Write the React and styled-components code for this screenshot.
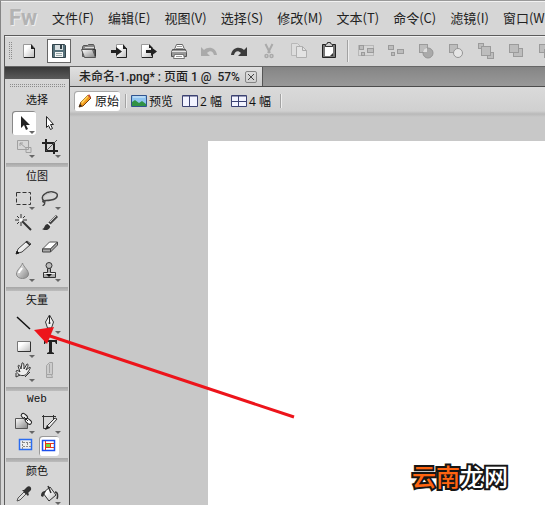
import React from 'react';
import styled, { createGlobalStyle, css } from 'styled-components';

const GlobalStyle = createGlobalStyle`
  * {
    box-sizing: border-box;
  }
  body {
    margin: 0;
    background: #d6d6d6;
    font-family: 'Noto Sans', 'Noto Sans CJK SC', sans-serif;
    color: #111;
  }
  button {
    font: inherit;
    color: inherit;
    border: 0;
    padding: 0;
    background: none;
  }
  svg {
    display: block;
    flex: none;
  }
`;

const dots = css`
  background: repeating-linear-gradient(#d6d6d6 0 1px, transparent 1px 2px),
    repeating-linear-gradient(90deg, #8c8c8c 0 1px, #d6d6d6 1px 2px);
`;

const Window = styled.div`
  position: relative;
  height: 100vh;
  display: flex;
  flex-direction: column;
  overflow: hidden;
  white-space: nowrap;
  border-top: 1px solid #9a9a9a;
  border-left: 1px solid #858585;
`;

const MenuBar = styled.nav`
  flex: none;
  height: 34px;
  display: flex;
  align-items: center;
  gap: 14px;
  padding: 0 0 2px 8px;
  border-top: 1px solid #f2f2f2;
  background: #d6d6d6;
  overflow: hidden;
`;

const Logo = styled.span`
  flex: none;
  width: 29px;
  font: 700 22px/24px Roboto, sans-serif;
  color: #b3b3b3;
  text-shadow: 1px 1px 0 #eee;
`;

const MenuItem = styled.button`
  flex: none;
  font-family: 'Noto Sans CJK SC', sans-serif;
  font-size: 13px;
  line-height: 20px;
  color: #222;
`;

const Body = styled.div`
  flex: 1;
  min-height: 0;
  display: flex;
  flex-direction: column;
  margin-left: 3px;
  border-left: 1px solid #5c5c5c;
  border-top: 1px solid #5c5c5c;
`;

const ToolBar = styled.div`
  flex: none;
  height: 31px;
  display: flex;
  align-items: center;
  gap: 6px;
  padding: 0 0 2px 4px;
  border-top: 1px solid #f0f0f0;
  border-bottom: 1px solid #666;
  background: #d6d6d6;
  overflow: hidden;
`;

const Grip = styled.span`
  flex: none;
  width: 4px;
  height: 19px;
  margin-right: -2px;
  ${dots}
`;

const ToolBarButton = styled.button`
  flex: none;
  width: 24px;
  height: 24px;
  display: flex;
  align-items: center;
  justify-content: center;
  ${props =>
    props.$active &&
    css`
      background: #fff;
      border: 1px solid #666;
    `}
`;

const Separator = styled.span`
  flex: none;
  width: 1px;
  height: ${props => props.$height};
  background: #a2a2a2;
  box-shadow: 1px 0 0 #eee;
`;

const Main = styled.div`
  flex: 1;
  min-height: 0;
  display: flex;
`;

const Palette = styled.aside`
  flex: none;
  width: 65px;
  border-right: 1px solid #4a4a4a;
  background: #d6d6d6;
  overflow: hidden;
`;

const PaletteHead = styled.div`
  height: 12px;
  background: linear-gradient(#383838, #5b5b5b);
`;

const PaletteGrip = styled.div`
  height: 4px;
  margin: 4px 4px 4px 5px;
  ${dots}
`;

const Section = styled.section`
  padding-bottom: ${props => (props.$tight ? '1px' : '4px')};
`;

const SectionTitle = styled.h2`
  height: 20px;
  margin: 0;
  font: 400 11px/17px ${props => (props.$mono ? "'Liberation Mono'" : "'Noto Sans CJK SC'")}, sans-serif;
  text-align: center;
`;

const Divider = styled.hr`
  height: 4px;
  margin: 0 1px;
  border: 0;
  background: linear-gradient(#a6a6a6, #bcbcbc);
`;

const ToolGrid = styled.div`
  display: grid;
  grid-template-columns: 26px 26px;
  grid-auto-rows: 24px;
  justify-content: center;
`;

const Tool = styled.button`
  width: 24px;
  height: 24px;
  margin: 0 1px;
  border-radius: 3px;
  ${props =>
    props.$active &&
    css`
      background: #fff;
      box-shadow: inset 1px 1px 0 #888;
    `}
`;

const WebModes = styled.div`
  display: flex;
  justify-content: center;
  gap: 3px;
  padding: 1px 0;
`;

const ModeButton = styled.button`
  width: 20px;
  height: 20px;
  border-radius: 3px;
  background: ${props => (props.$active ? '#fff' : 'none')};
  box-shadow: ${props => (props.$active ? 'inset 1px 1px 0 #999' : 'none')};
`;

const Document = styled.main`
  flex: 1;
  min-width: 0;
  display: flex;
  flex-direction: column;
`;

const TabStrip = styled.div`
  flex: none;
  height: 20px;
  display: flex;
  border-bottom: 1px solid #4c4c4c;
  background: linear-gradient(#858585, #999);
`;

const Tab = styled.div`
  display: flex;
  align-items: center;
  gap: 5px;
  padding: 0 5px 0 9px;
  border-right: 1px solid #555;
  background: linear-gradient(#e0e0e0, #cbcbcb);
  font: 500 12px/18px Roboto, 'Noto Sans CJK SC', sans-serif;
  color: #222;
  white-space: pre;
`;

const CloseButton = styled.button`
  width: 12px;
  height: 12px;
  border: 1px solid #858585;
  border-radius: 2px;
`;

const ViewBar = styled.div`
  flex: none;
  height: 30px;
  display: flex;
  align-items: center;
  gap: 5px;
  padding: 0 4px 3px;
  background: linear-gradient(#dadada, #d0d0d0 24px, #b9b9b9 27px, #c8c8c8);
`;

const ViewButton = styled.button`
  display: flex;
  align-items: center;
  gap: 2px;
  height: 20px;
  padding: ${props => (props.$active ? '0 1px 0 3px' : '0 4px 0 0')};
  font-size: 12px;
  font-family: 'Open Sans', 'Noto Sans CJK SC', sans-serif;
  ${props =>
    props.$active &&
    css`
      background: #fff;
      border-radius: 3px;
      box-shadow: inset 1px 1px 0 #aaa;
    `}
`;

const Workspace = styled.div`
  flex: 1;
  min-height: 0;
  display: flex;
  padding: 24px 0 0 138px;
  background: #c8c8c8;
`;

const Page = styled.div`
  flex: 1;
  background: #fff;
`;

const Pointer = styled.svg`
  position: absolute;
  left: 32px;
  top: 324px;
  pointer-events: none;
`;

const Watermark = styled.div`
  position: absolute;
  right: 37px;
  bottom: 12px;
  font: 500 24px/34px 'Noto Sans CJK SC', sans-serif;
  color: #fff;
  -webkit-text-stroke: 4px #161616;
  paint-order: stroke fill;

  em {
    font-style: normal;
    color: #ff6410;
  }
`;

const menus = ['文件(F)', '编辑(E)', '视图(V)', '选择(S)', '修改(M)', '文本(T)', '命令(C)', '滤镜(I)', '窗口(W)'];

const FLYOUT = <path d="M17 20h6l-3 3z" fill="#666" />;

const Glyph = ({ size = 24, children }) => (
  <svg width={size} height={size} viewBox={`0 0 ${size} ${size}`} fill="none" aria-hidden="true">
    <defs>
      <linearGradient id="paper" x1="0" y1="0" x2="1" y2="1">
        <stop offset="0.3" stopColor="#fff" />
        <stop offset="1" stopColor="#bbb" />
      </linearGradient>
      <linearGradient id="steel" x1="0" y1="0" x2="1" y2="1">
        <stop offset="0" stopColor="#fff" />
        <stop offset="1" stopColor="#858585" />
      </linearGradient>
    </defs>
    {children}
  </svg>
);

const block = (x, y, w, h) => (
  <rect key={`${x}-${y}`} x={x + 0.5} y={y + 0.5} width={w} height={h} fill="#bdbdbd" stroke="#9b9b9b" />
);

// standard toolbar, left to right
const commands = [
  {
    label: '新建',
    icon: (
      <>
        <path d="M6.500 5.500h8l3 3.500v9.500h-11z" fill="url(#paper)" stroke="#999" />
        <path d="M17.500 9v9.500H7" stroke="#222" />
        <path d="M14 5l4 5h-4z" fill="#222" />
      </>
    ),
  },
  {
    label: '保存',
    active: true,
    icon: (
      <>
        <path d="M5.500 5.500h12l1 1v12h-13z" fill="#56717a" stroke="#33454c" />
        <path d="M8 6h8v5H8z" fill="#d9e0e2" />
        <path d="M13 6h2v4h-2z" fill="#34434a" />
        <path d="M8 13h8v5H8z" fill="#f5f5f5" />
        <path d="M9 14.500h6M9 16.500h6" stroke="#9aa" />
      </>
    ),
  },
  {
    label: '打开',
    icon: (
      <>
        <path d="M5.500 17.500V8l1-1.500h4l1-1h5l1 2v10z" fill="#8a8a8a" stroke="#555" />
        <path d="M4.500 10.500h11l3 8h-11z" fill="url(#steel)" stroke="#555" />
        <path d="M15.500 10.500h3v7" stroke="#333" />
        <path d="M8 8.500h9" stroke="#ddd" />
      </>
    ),
  },
  {
    label: '导入',
    icon: (
      <>
        <path d="M9.500 5.500h6l4 4v9h-10z" fill="url(#paper)" stroke="#999" />
        <path d="M19.500 9v9.500H10" stroke="#222" />
        <path d="M16 5l4 5h-4z" fill="#222" />
        <path d="M4 11h5V8l6 4.500L9 17v-3H4z" fill="#222" />
      </>
    ),
  },
  {
    label: '导出',
    icon: (
      <>
        <path d="M4.500 5.500h7l4 4v9h-11z" fill="url(#paper)" stroke="#999" />
        <path d="M15.500 15v3.500H5" stroke="#222" />
        <path d="M12 5l4 4h-4z" fill="#222" />
        <path d="M9 11h5V8l6 4.500-6 4.500v-3H9z" fill="#222" />
      </>
    ),
  },
  {
    label: '打印',
    icon: (
      <>
        <path d="M7.500 10.500l2-5h6l2 5z" fill="#fff" stroke="#666" />
        <path d="M10 7.500h5M9 9.500h7" stroke="#999" />
        <path d="M5.500 10.500h13l1 3v4h-3v-2h-9v2h-3v-4z" fill="#999" stroke="#555" />
        <path d="M7.500 15.500h9l1 4h-11z" fill="#fff" stroke="#777" />
        <path d="M5 12.500h14" stroke="#e5e5e5" />
        <path d="M9 17.500h6" stroke="#999" />
      </>
    ),
  },
  {
    label: '撤消',
    disabled: true,
    icon: <path d="M4 8v9h9l-3-3c3-3 6-2 7 2h3c-1-8-9-9-13-5z" fill="#aaa" />,
  },
  {
    label: '重做',
    icon: <path d="M20 8v9h-9l3-3c-3-3-6-2-7 2H4c1-8 9-9 13-5z" fill="#3c3c3c" />,
  },
  {
    label: '剪切',
    disabled: true,
    icon: (
      <>
        <path d="M8.500 5l4.500 9M15.500 5L11 14" stroke="#aaa" strokeWidth="2" />
        <circle cx="9.500" cy="17" r="1.500" stroke="#aaa" strokeWidth="1.500" />
        <circle cx="14.500" cy="17" r="1.500" stroke="#aaa" strokeWidth="1.500" />
      </>
    ),
  },
  {
    label: '复制',
    disabled: true,
    icon: (
      <>
        <path d="M4.500 4.500h6l3 3v9h-9z" fill="#ddd" stroke="#b8b8b8" />
        <path d="M9.500 7.500h6l4 4v7h-10z" fill="#e3e3e3" stroke="#b0b0b0" />
        <path d="M15.500 7.500v4h4" stroke="#aaa" />
      </>
    ),
  },
  {
    label: '粘贴',
    icon: (
      <>
        <path d="M5.500 5.500h13v13h-13z" fill="#777" stroke="#222" />
        <path d="M8 8h8v7l-2 2H8z" fill="#fff" />
        <path d="M16 14v3h-3z" fill="#333" />
        <path d="M8.500 7.500v-2l2-1v-1h3v1l2 1v2z" fill="#ccc" stroke="#333" />
      </>
    ),
  },
];

const arrange = [
  {
    label: '组合',
    icon: (
      <>
        <path d="M4.500 6.500h15v10h-15z" stroke="#999" strokeDasharray="1 1" />
        {block(5, 6, 4, 4)}
        {block(13, 9, 6, 4)}
        {block(7, 13, 3, 3)}
      </>
    ),
  },
  {
    label: '取消组合',
    icon: [block(4, 6, 5, 4), block(13, 10, 6, 4), block(7, 13, 3, 3)],
  },
  {
    label: '联合',
    icon: (
      <>
        {block(5, 5, 8, 8)}
        <circle cx="14" cy="14" r="5" fill="#aaa" stroke="#959595" />
        <path d="M9 13c0-2 2-4 4-4v4z" fill="#ddd" />
      </>
    ),
  },
  {
    label: '打孔',
    icon: (
      <>
        {block(5, 5, 8, 8)}
        <circle cx="14" cy="14" r="4.500" fill="#e5e5e5" stroke="#959595" />
      </>
    ),
  },
  { label: '移到最前', icon: [block(4, 4, 5, 5), block(13, 13, 6, 6), block(7, 7, 9, 9)] },
  { label: '前移', icon: [block(9, 9, 9, 8), block(5, 5, 9, 8)] },
  { label: '后移', icon: [block(5, 5, 9, 8), block(10, 10, 8, 8)] },
];

const tools = {
  选择: [
    {
      label: '指针',
      active: true,
      icon: (
        <>
          <path d="M9 5v12l3-3 2 5 2-1-2-4h4z" fill="#222" />
          {FLYOUT}
        </>
      ),
    },
    {
      label: '部分选定',
      icon: <path d="M8.500 5.500v11l2-2 2 4 2-1-2-4h3z" fill="#fff" stroke="#222" />,
    },
    {
      label: '缩放',
      disabled: true,
      icon: (
        <>
          <path d="M5.500 5.500h11v9h-11zM14 12.500h5v5h-5zM8 8l6 5M8 11V8h3" stroke="#a0a0a0" />
          {FLYOUT}
        </>
      ),
    },
    {
      label: '裁剪',
      icon: (
        <>
          <path d="M4 8h12v11M8 4v12h12" stroke="#222" strokeWidth="2" />
          <path d="M8 16L19 5" stroke="#555" />
          {FLYOUT}
        </>
      ),
    },
  ],
  位图: [
    {
      label: '选取框',
      icon: (
        <>
          <path d="M4.500 5.500h14v12h-14z" stroke="#333" strokeDasharray="4 2" />
          {FLYOUT}
        </>
      ),
    },
    {
      label: '套索',
      icon: (
        <>
          <path
            d="M6 14C1 10 8 4 15 5c7 1 5 7-2 8-4 1-7 0-8 1s3 2 2 0M6 15c2 2-1 3-1 4"
            stroke="#444"
            strokeWidth="1.500"
          />
          <path d="M6 12C4 9 9 6 14 6" stroke="#bbb" />
          {FLYOUT}
        </>
      ),
    },
    {
      label: '魔术棒',
      icon: (
        <>
          <path d="M10 10l9 9" stroke="#333" strokeWidth="2" />
          <path d="M9 3v4M9 11v4M3 9h4M11 9h4M5 5l2 2M13 5l-2 2M5 13l2-2" stroke="#333" />
          <circle cx="9" cy="9" r="1.500" fill="#fff" />
        </>
      ),
    },
    {
      label: '刷子',
      icon: (
        <>
          <path d="M11 13l8-8" stroke="#444" strokeWidth="3" />
          <path d="M12 11l6-6" stroke="#ccc" />
          <path d="M4 18c3 0 2-5 6-5 4 1 2 5-1 6-2 0-4 0-5-1z" fill="#333" />
          <path d="M10 12l3 3" stroke="#eee" strokeWidth="1.500" />
        </>
      ),
    },
    {
      label: '铅笔',
      icon: (
        <>
          <path d="M4.500 18.500L6 14l9-8 4 3-9 8z" fill="url(#paper)" stroke="#444" />
          <path d="M4 19l1-3 2 2z" fill="#111" stroke="#222" />
          <path d="M14 6.500l4 3.500" stroke="#222" strokeWidth="1.500" />
        </>
      ),
    },
    {
      label: '橡皮擦',
      icon: (
        <>
          <path d="M4.500 14l7-7h8l-7 7z" fill="#fff" stroke="#555" />
          <path d="M4.500 14h8v3h-8zM12.500 14l7-7v3l-7 7z" fill="#aaa" stroke="#444" />
        </>
      ),
    },
    {
      label: '模糊',
      icon: (
        <>
          <path d="M10.500 4c1 4 6 7 6 11 0 6-12 6-12 0 0-4 5-7 6-11z" fill="url(#steel)" stroke="#888" />
          <path d="M7 14c0-2 2-3 3-5" stroke="#fff" strokeWidth="2" />
          {FLYOUT}
        </>
      ),
    },
    {
      label: '橡皮图章',
      icon: (
        <>
          <path d="M9.500 9.500h3v4h5v5h-12v-5h4z" fill="#aaa" stroke="#333" />
          <circle cx="11" cy="6.500" r="3" fill="#bbb" stroke="#333" />
          <path d="M6 14.500h11" stroke="#eee" />
          <path d="M8 15h6l-3 3z" fill="#111" />
          {FLYOUT}
        </>
      ),
    },
  ],
  矢量: [
    { label: '直线', icon: <path d="M5 6l13 12" stroke="#111" strokeWidth="1.500" /> },
    {
      label: '钢笔',
      icon: (
        <>
          <path d="M11.500 4l4 7-2 6h-4l-2-6z" fill="#eee" stroke="#333" />
          <path d="M11.500 5v6" stroke="#222" />
          <circle cx="11.500" cy="12" r="1" fill="#222" />
          <path d="M9 17h5v2H9z" fill="#222" />
          {FLYOUT}
        </>
      ),
    },
    {
      label: '矩形',
      icon: (
        <>
          <path d="M5.500 6.500h13v10h-13z" fill="url(#paper)" stroke="#777" />
          <path d="M18.500 7v9.500H6" stroke="#333" />
          {FLYOUT}
        </>
      ),
    },
    { label: '文本', icon: <path d="M6 5h13v4h-1l-1-2h-3v10l2 1v1H9v-1l2-1V7H8L7 9H6z" fill="#222" /> },
    {
      label: '自由变形',
      icon: (
        <>
          <path
            d="M7 16c-1-2-3-3-3-4 1-1 3 0 4 1L6 7c1-2 2 0 3 3l1-6c2-1 2 2 2 6l3-5c2 0 1 2-1 6l4-3c1 1-1 3-2 5-2 4-5 4-9 3z"
            fill="#eee"
            stroke="#333"
          />
          <path d="M4 14v4l4-2M13 18l5-5" stroke="#333" />
          {FLYOUT}
        </>
      ),
    },
    {
      label: '刀子',
      disabled: true,
      icon: (
        <path d="M8.500 15.500v-9l3-3h3v12zM8.500 15.500v3h6l-1-3M11.500 5v9" fill="#ccc" stroke="#a5a5a5" />
      ),
    },
  ],
  Web: [
    {
      label: '热点',
      icon: (
        <>
          <path d="M3.500 7.500h12v10h-12z" fill="url(#steel)" stroke="#555" />
          <rect x="9" y="3" width="7" height="4" rx="2" transform="rotate(40 12 5)" fill="#eee" stroke="#222" />
          <rect x="13" y="8" width="7" height="4" rx="2" transform="rotate(40 16 10)" fill="#fff" stroke="#222" />
          <path d="M12 6l4 4" stroke="#222" />
          {FLYOUT}
        </>
      ),
    },
    {
      label: '切片',
      icon: (
        <>
          <path d="M4 5.500h14M5.500 4v13.500H9M15.500 4v4" stroke="#333" />
          <path d="M9 15l8-8 2 1-8 9z" fill="#eee" stroke="#333" />
          <path d="M7 19l2-5 3 3z" fill="#222" />
          {FLYOUT}
        </>
      ),
    },
  ],
  颜色: [
    {
      label: '滴管',
      icon: (
        <>
          <path d="M5 19l1-3 6-6 2 2-6 6z" fill="#ddd" stroke="#555" />
          <path d="M10 8l6 6 1-2-1-1 3-3c1-3-2-5-4-3l-3 3z" fill="#333" />
        </>
      ),
    },
    {
      label: '油漆桶',
      icon: (
        <>
          <path d="M5 11l7-6 6 8-7 6z" fill="url(#paper)" stroke="#333" />
          <path d="M3 14c0-4 2-5 5-5l-3 6z" fill="#333" />
          <path d="M10 4l3 7M17 10c3 0 3 4 2 7" stroke="#333" strokeWidth="1.500" />
          {FLYOUT}
        </>
      ),
    },
  ],
};

const modes = [
  {
    label: '隐藏切片和热点',
    icon: (
      <>
        <path d="M3.500 3.500h12v10h-12z" fill="#eee" stroke="#2a6cf0" strokeWidth="1.500" />
        <path d="M6.500 5v8M7 6.500h8M7 10.500h8M11.500 7v3" stroke="#8a8a8a" strokeDasharray="2 1" />
      </>
    ),
  },
  {
    label: '显示切片和热点',
    active: true,
    icon: (
      <>
        <path d="M3.500 4.500h12v10h-12z" fill="#fff" stroke="#1c50ee" strokeWidth="1.500" />
        <path d="M7 8h4v4H7z" fill="#72dc3c" />
        <path d="M6.500 5v9M7 7.500h8M7 11.500h8M11.500 8v3" stroke="#e33a1a" />
      </>
    ),
  },
];

const pictureIcon = (
  <>
    <path d="M.5 2.500h15v11H.5z" fill="#8fc4f0" stroke="#31548f" />
    <path d="M1 13V9l3-2 4 3 3-2 4 3v2z" fill="#309244" />
    <path d="M2 4h12" stroke="#dceefa" />
  </>
);

const splitIcon = rows => (
  <>
    <path d="M.5 2.500h15v11H.5z" fill="#f2f3ff" stroke="#3c4272" />
    <path d="M1 3h14M7.500 3v10" stroke="#3c4272" />
    {rows > 1 && <path d="M1 8.500h14" stroke="#3c4272" />}
  </>
);

const pencilIcon = (
  <>
    <path d="M2 14l2-5 7-7 3 3-8 8z" fill="#f29a1d" stroke="#79410b" />
    <path d="M4 9l7-7 1 1-7 8z" fill="#ffd45e" />
    <path d="M11 3l1-2 2 3-1 1z" fill="#c44c3c" />
    <path d="M2 14l1-3 2 2z" fill="#222" />
  </>
);

const views = [
  { label: '预览', icon: pictureIcon },
  { label: '2 幅', icon: splitIcon(1) },
  { label: '4 幅', icon: splitIcon(2) },
];

const CommandButton = ({ label, icon, active, disabled }) => (
  <ToolBarButton aria-label={label} $active={active} disabled={disabled}>
    <Glyph>{icon}</Glyph>
  </ToolBarButton>
);

const ToolSection = ({ name }) => (
  <Section $tight={name === 'Web'}>
    <SectionTitle $mono={name === 'Web'}>{name}</SectionTitle>
    <ToolGrid>
      {tools[name].map(({ label, icon, active, disabled }) => (
        <Tool key={label} aria-label={label} $active={active} disabled={disabled}>
          <Glyph>{icon}</Glyph>
        </Tool>
      ))}
    </ToolGrid>
    {name === 'Web' && (
      <WebModes>
        {modes.map(({ label, icon, active }) => (
          <ModeButton key={label} aria-label={label} $active={active}>
            <Glyph size={20}>{icon}</Glyph>
          </ModeButton>
        ))}
      </WebModes>
    )}
  </Section>
);

export default function App() {
  return (
    <Window>
      <GlobalStyle />
      <MenuBar>
        <Logo>Fw</Logo>
        {menus.map(menu => (
          <MenuItem key={menu}>{menu}</MenuItem>
        ))}
      </MenuBar>
      <Body>
        <ToolBar>
          <Grip />
          {commands.map(command => (
            <CommandButton key={command.label} {...command} />
          ))}
          <Separator $height="22px" />
          {arrange.map(command => (
            <CommandButton key={command.label} disabled {...command} />
          ))}
        </ToolBar>
        <Main>
          <Palette>
            <PaletteHead />
            <PaletteGrip />
            {Object.keys(tools).map((name, index) => (
              <React.Fragment key={name}>
                {index > 0 && <Divider />}
                <ToolSection name={name} />
              </React.Fragment>
            ))}
          </Palette>
          <Document>
            <TabStrip>
              <Tab>
                {'未命名-1.png* : 页面 1 @  57%'}
                <CloseButton aria-label="关闭">
                  <Glyph size={10}>
                    <path d="M2 2l6 6M8 2L2 8" stroke="#444" />
                  </Glyph>
                </CloseButton>
              </Tab>
            </TabStrip>
            <ViewBar>
              <ViewButton $active>
                <Glyph size={16}>{pencilIcon}</Glyph>
                原始
              </ViewButton>
              <Separator $height="14px" />
              {views.map(({ label, icon }) => (
                <ViewButton key={label}>
                  <Glyph size={16}>{icon}</Glyph>
                  {label}
                </ViewButton>
              ))}
              <Separator $height="14px" />
            </ViewBar>
            <Workspace>
              <Page />
            </Workspace>
          </Document>
        </Main>
      </Body>
      <Pointer width="264" height="96" viewBox="0 0 264 96" aria-hidden="true">
        <path d="M14 10L261 92" stroke="#ed141b" strokeWidth="3" />
        <path d="M1 5L21 2 14 19z" fill="#ed141b" />
      </Pointer>
      <Watermark>
        <em>云南</em>龙网
      </Watermark>
    </Window>
  );
}
